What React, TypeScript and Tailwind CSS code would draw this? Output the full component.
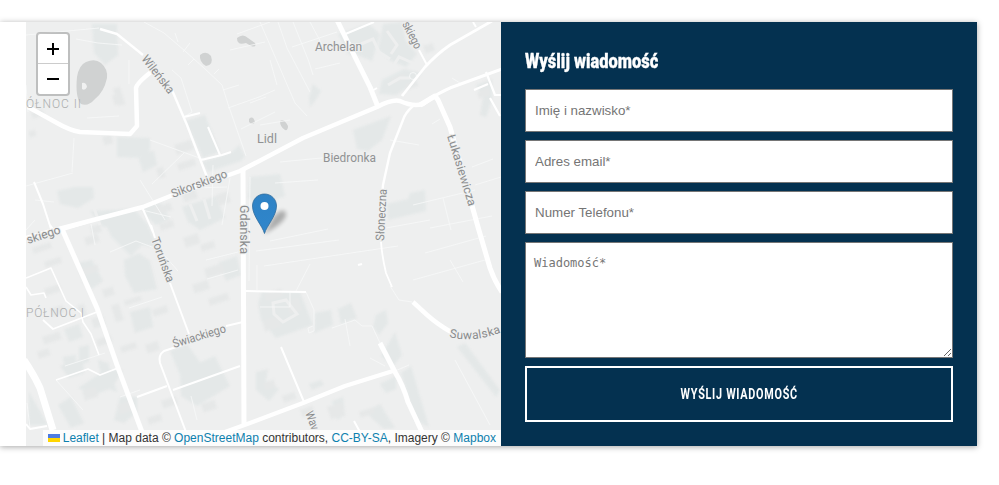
import React from "react";

type Road = [string, number];

const roads: Road[] = [
  // Main streets
  ["M26 238L55 230L143 207L173 195L240 171L303 138L377 107Q392 99 400 101Q413 107 423 104L433 97", 4.5],
  ["M420 105L435 96L438 100L450 127L478 227L490 268Q495 282 502 292", 5],
  ["M433 97Q446 89 458 85L502 69", 3],
  ["M243 169L244 424", 5],
  ["M225 432L250 423L303 403L345 386L393 371", 4.2],
  ["M337 20L353 53L370 87L378 107", 5],
  ["M402 96L425 67Q437 54 450 45L492 21", 2.8],
  ["M413 302L426 314Q437 324 451 332", 4.5],
  ["M380 343L395 372Q403 385 408 402L422 432", 5],
  ["M62 229L97 308L117 365L142 432", 5],
  ["M24 360Q34 375 40 388L53 430", 7],
  ["M28 107L57 123Q69 130 80 132L130 134L137 126L136 88Q137 83 151 72", 4.5],
  // Secondary streets
  ["M100 29L117 34L143 55M172 90L187 125L207 177", 2.4],
  ["M413 106Q405 113 403 120L390 153L383 185L379 232", 2.4],
  ["M381 242Q382 256 386 273L392 287", 1.8],
  ["M343 35L374 22M419 50L427 65M370 92L377 88M473 22L476 27", 2],
  ["M184 117L200 113M208 127L220 155M201 160L222 155L231 152", 2],
  ["M34 182L43 204L52 232M142 207L153 232M151 225L155 238M170 283L189 334M50 225L56 233M63 230L86 223", 2],
  ["M26 278L51 268L66 301L81 313L83 322L91 334L99 355M26 287L31 295L44 293L46 298", 1.6],
  ["M43 320L53 329L97 312M56 380L88 369L100 375L118 368", 1.8],
  ["M137 397L167 386M173 390L240 366M186 432L160 363Q158 355 164 351L182 345M226 326L243 322", 2],
  ["M246 291L306 292M281 347L304 402M354 421L360 432M26 424L30 429L47 426", 2],
  ["M486 72L495 95L502 95M474 90L488 84M490 98L500 116", 2.2],
];

const lanes =
  "M144 22L164 33L185 51L204 68L222 85L228 104L246 156M172 70L181 78L192 112L184 117M190 43L183 52M175 33L178 42M194 59L188 65M214 74L219 69M223 90L239 85M228 108L259 97L275 90M241 129L275 112M260 22L273 52L295 103L307 116M278 22L287 48L310 92M293 22L309 62L313 75M310 22L325 50M237 34L270 22M250 103L266 97M230 50L265 42M292 47L337 32M315 69L340 63M26 35L99 28M76 39L98 43L122 45M26 85L28 112M129 60L129 84M74 138L72 172M26 186L73 173M26 230L35 220M306 292L314 310L314 331L309 333L308 328L313 326M332 328L355 320L362 326L372 326L380 343M260 307L290 307L290 293M395 371L409 365M256 251L339 240M264 266L398 246M310 264L296 291M257 265L257 290M390 286L399 300L412 302M280 162L352 155M275 183L318 180M432 124L440 119M472 167L493 159M475 185L501 177M413 205L475 190M430 228L492 216M425 253L486 236M413 280L485 260M450 260L463 282M386 228L430 220M443 198L451 230M260 125L290 120M270 60L277 85M455 360L490 425M370 358L385 366M345 319L350 346M390 140L419 145M452 78L460 83M270 241L328 229M56 380L83 410M27 403L30 428M91 224L95 245M206 260L238 252M207 279L238 270M110 252L136 241L160 250L178 271M129 308L162 297M65 366L105 353M70 245L90 296M142 210L171 217M120 397L140 390M191 396L197 420M150 140L205 160M152 184L184 153M140 180L165 220M87 118L119 116M35 200L54 202M213 165L212 206M193 188L227 187M230 178L222 225M250 177L249 281";

const blocks =
  "M92 24L117 24L118 55L105 65L94 53ZM185 121L205 115L220 152L203 158ZM202 162L232 152L239 145L245 156L241 161L208 172ZM117 137L150 138L150 150L142 158L117 157ZM137 153L154 151L157 165L143 172ZM57 191L75 187L93 187L94 198L78 208L60 204ZM353 130L391 116L382 140L368 151L357 149ZM250 177L280 174L285 196L261 205L248 198ZM387 204L408 199L410 193L425 190L426 211L388 220ZM338 34L369 24L380 34L372 61L357 55L349 55ZM383 24L402 22L406 41L417 54L406 67L391 61L378 50ZM382 80L404 69L422 73L410 86L396 95L379 94ZM476 85L492 79L492 100L486 117L480 115L483 97ZM313 84L321 91L315 101L310 107L309 98ZM106 225L148 225L158 248L142 245L131 256L111 236ZM124 260L139 253L150 261L157 289L134 293L125 276ZM77 263L92 260L103 281L92 289L83 282ZM90 211L134 209L148 225L103 227ZM141 206L161 203L170 219L156 225L146 216ZM182 207L216 196L225 218L200 230L188 222ZM218 263L237 256L241 275L226 281ZM29 392L48 425L28 425ZM60 366L83 359L84 373L69 378ZM64 329L79 324L83 337L69 342ZM63 357L76 355L75 368L64 366ZM79 347L89 345L89 362L79 365ZM130 312L150 307L153 327L135 333ZM180 371L215 356L230 386L197 406L181 396ZM78 388L105 370L123 370L112 388L94 395ZM170 351L187 344L202 365L180 375ZM262 292L300 292L313 325L276 338L261 320L258 303ZM315 313L331 310L333 325L314 333ZM338 309L351 303L357 318L341 324ZM376 315L386 310L388 323L379 335L373 327ZM381 356L395 332L402 355L393 366ZM401 373L411 366L429 427L415 420ZM457 347L465 343L500 390L496 397ZM256 372L268 369L266 381L279 389L269 401L256 390ZM309 384L321 380L324 385L312 390ZM332 401L343 397L345 415L337 420ZM365 412L380 404L395 428L384 429ZM380 384L396 376L396 389L386 393ZM120 397L137 397L137 412L124 423L114 420ZM58 405L71 397L84 423L71 428ZM98 360L108 363L117 392L103 387Z";

const houses = [
  [174, 145, 18, 10], [177, 164, 18, 7], [156, 169, 7, 10], [102, 137, 9, 9],
  [112, 96, 10, 10], [113, 89, 7, 18], [31, 113, 12, 6], [28, 132, 7, 6],
  [153, 208, 18, 8], [181, 191, 14, 12], [216, 195, 12, 11], [90, 227, 10, 8],
  [32, 248, 19, 6], [44, 262, 17, 6], [84, 238, 14, 8], [44, 289, 16, 7],
  [79, 270, 19, 7], [102, 290, 11, 8], [159, 224, 14, 7], [183, 238, 15, 10],
  [200, 245, 14, 7], [204, 269, 19, 10], [192, 285, 16, 9], [208, 299, 20, 7],
  [111, 306, 8, 17], [124, 301, 17, 5], [152, 310, 15, 7], [50, 309, 13, 8],
  [42, 337, 18, 8], [37, 352, 12, 7], [77, 306, 7, 14], [91, 319, 12, 10],
  [96, 340, 15, 7], [120, 347, 16, 6], [145, 345, 13, 9], [161, 401, 15, 8],
  [201, 404, 14, 9], [117, 405, 13, 10], [147, 418, 14, 7], [82, 391, 14, 10],
  [264, 294, 18, 8], [286, 302, 13, 13], [262, 321, 17, 11], [263, 383, 11, 8],
  [282, 396, 13, 7], [300, 410, 13, 8], [327, 407, 15, 13], [359, 412, 15, 6],
  [423, 46, 10, 8], [391, 78, 14, 6], [405, 84, 12, 6], [477, 92, 12, 7],
] as const;

interface LabelProps {
  x: number;
  y: number;
  width?: number;
  rotate?: number;
  size?: number;
  fill?: string;
  children: string;
}

function Label({ x, y, width, rotate = 0, size = 12, fill = "#8a8c8d", children }: LabelProps) {
  return (
    <text
      transform={`translate(${x} ${y}) rotate(${rotate})`}
      fontSize={size}
      fill={fill}
      stroke="#eeefef"
      strokeWidth="2"
      paintOrder="stroke"
      textLength={width}
      lengthAdjust="spacingAndGlyphs"
    >
      {children}
    </text>
  );
}

function StreetMap() {
  return (
    <svg
      viewBox="26 22 475 424"
      className="block h-full w-full overflow-hidden bg-[#eeefef] font-['Roboto','Open_Sans',sans-serif]"
    >
      <defs>
        <linearGradient id="pin" x1="0" y1="0" x2="0" y2="1">
          <stop offset="0" stopColor="#2e82c5" />
          <stop offset="1" stopColor="#2f86cc" />
        </linearGradient>
        <filter id="soft" x="-40%" y="-40%" width="180%" height="180%">
          <feGaussianBlur stdDeviation="2.2" />
        </filter>
        <filter id="edge" x="0" y="0" width="100%" height="100%" colorInterpolationFilters="sRGB">
          <feGaussianBlur stdDeviation="0.8" />
        </filter>
        <path id="suwalska" d="M449 337Q475 344 507 330" />
      </defs>

      <g filter="url(#edge)">
        <path d={blocks} fill="#e4e8e8" />
        {houses.map(([x, y, w, h]) => (
          <rect key={`${x}-${y}`} x={x} y={y} width={w} height={h} fill="#e6e8e8" transform={`rotate(-18 ${x} ${y})`} />
        ))}
      </g>
      <g fill="none" stroke="#eeefef" strokeWidth="3">
        <path d="M361 44L373 39L379 52L390 59M376 72L392 68L399 57L415 64M388 85L400 78L410 78M387 31L397 45L391 54M190 204L197 221M204 199L210 219M93 205L100 225M273 303L286 300L297 314L283 322L274 314Z" />
      </g>
      <g fill="#d0d2d2">
        <path d="M77 77Q79 65 86 62Q95 58 101 63Q108 69 107 78Q104 92 95 99Q88 107 81 104Q75 97 77 77Z" />
        <path d="M200 55Q206 50 211 56Q214 65 206 66Q199 62 200 55Z" />
        <path d="M237 38Q243 33 248 38L255 43Q257 48 251 46L246 43Q237 46 237 38Z" />
        <path d="M249 119Q253 115 255 122Q253 126 249 122ZM280 121Q284 118 288 126Q288 131 285 130Q280 127 280 121Z" />
      </g>
      <path d="M82 83Q86 82 87 87Q85 91 82 89Z" fill="#f0f1f1" />

      <path d={lanes} fill="none" stroke="#f8f9f9" strokeWidth="0.8" />
      <g fill="none" stroke="#fff" strokeLinejoin="round">
        {roads.map(([d, w]) => (
          <path key={d} d={d} strokeWidth={w} />
        ))}
        <path d="M358 265L362 264" strokeWidth="2" />
        <circle cx="413" cy="76" r="3.5" strokeWidth="0.8" opacity=".7" />
      </g>

      <Label x={315} y={51} width={47} fill="#909293">Archelan</Label>
      <Label x={257} y={143} width={20} fill="#909293">Lidl</Label>
      <Label x={323} y={162} width={53} fill="#909293">Biedronka</Label>
      <Label x={141} y={59} width={45} rotate={52}>Wileńska</Label>
      <Label x={173} y={198} width={59} rotate={-21}>Sikorskiego</Label>
      <Label x={28} y={244} width={35} rotate={-18}>skiego</Label>
      <Label x={240} y={205} width={49} rotate={90}>Gdańska</Label>
      <Label x={384} y={241} width={52} rotate={-87}>Słoneczna</Label>
      <Label x={447} y={136} width={74} rotate={73}>Łukasiewicza</Label>
      <Label x={151} y={239} width={47} rotate={70}>Toruńska</Label>
      <Label x={174} y={348} width={55} rotate={-17}>Świackiego</Label>
      <Label x={402} y={24} width={29} rotate={63}>skiego</Label>
      <Label x={305} y={413} width={19} rotate={69}>Wav</Label>
      <text fontSize="12" fill="#8a8c8d" stroke="#eeefef" strokeWidth="2" paintOrder="stroke">
        <textPath href="#suwalska" textLength="53">Suwalska</textPath>
      </text>
      <text x="26" y="108" fontSize="12" fill="#acaeae" textLength="55" fontWeight="300">ÓŁNOC II</text>
      <text x="26" y="317" fontSize="12" fill="#acaeae" textLength="58" fontWeight="300">PÓŁNOC I</text>

      <path d="M264 234L274 216Q284 206 286 214Q286 222 264 234Z" fill="#000" opacity=".28" filter="url(#soft)" />
      <path
        d="M264.500 233.500C262.500 226 252.500 216 252.500 206C252.500 199 258 194 264.500 194C271 194 276.500 199 276.500 206C276.500 216 266.500 226 264.500 233.500Z"
        fill="url(#pin)"
        stroke="#2e6c9d"
        strokeWidth="0.8"
      />
      <circle cx="264.500" cy="206" r="4" fill="#fff" />
    </svg>
  );
}

function ZoomControl() {
  return (
    <div className="absolute top-[10px] left-[10px] flex w-[34px] flex-col overflow-hidden rounded border-2 border-black/20 bg-white bg-clip-padding">
      {["+", "−"].map((sign) => (
        <button
          key={sign}
          aria-label={sign}
          className="flex h-[30px] items-center justify-center text-black first:border-b first:border-[#ccc]"
        >
          <svg viewBox="0 0 12 12" className="h-3 w-3" stroke="currentColor" strokeWidth="2">
            <path d={sign === "+" ? "M0 6H12M6 0V12" : "M0 6H12"} />
          </svg>
        </button>
      ))}
    </div>
  );
}

function Attribution() {
  return (
    <div className="absolute right-0 bottom-0 flex h-[16px] items-center bg-white/80 px-[5px] font-['Liberation_Sans',Arial,sans-serif] text-[12px] leading-[16px] whitespace-pre text-[#333]">
      <svg viewBox="0 0 12 8" className="mr-[3px] h-2 w-3">
        <path fill="#4c7be1" d="M0 0h12v4H0z" />
        <path fill="#ffd500" d="M0 4h12v4H0z" />
      </svg>
      <a className="text-[#0d80ae]">Leaflet</a>
      {" | Map data © "}
      <a className="text-[#0d80ae]">OpenStreetMap</a>
      {" contributors, "}
      <a className="text-[#0d80ae]">CC-BY-SA</a>
      {", Imagery © "}
      <a className="text-[#0d80ae]">Mapbox</a>
    </div>
  );
}

function ContactForm() {
  return (
    <form className="flex h-full w-[476px] shrink-0 flex-col gap-2 bg-[#043150] px-6 pt-[22px] pb-6">
      <h2 className="mb-[5px] h-[32px] font-['Roboto','Open_Sans',sans-serif] text-[21px] leading-[34px] font-black text-white">
        <span className="inline-block origin-left scale-x-[0.785] whitespace-nowrap [-webkit-text-stroke:0.3px_white]">
          Wyślij wiadomość
        </span>
      </h2>
      {["Imię i nazwisko*", "Adres email*", "Numer Telefonu*"].map((label) => (
        <input
          key={label}
          placeholder={label}
          className="h-[43px] w-full shrink-0 border border-[#767676] bg-white px-[9px] font-['Liberation_Sans',Arial,sans-serif] text-[13.333px] placeholder:text-[#757575]"
        />
      ))}
      <textarea
        placeholder="Wiadomość*"
        className="block h-[116px] w-full shrink-0 resize border border-[#767676] bg-white px-2 py-[12px] font-['DejaVu_Sans_Mono',monospace] text-[12px] leading-[16px] placeholder:text-[#757575]"
      />
      <button
        type="button"
        className="flex h-14 w-full shrink-0 items-center justify-center border-2 border-white pt-px font-['Roboto','Open_Sans',sans-serif] text-[15px] font-bold tracking-[1px] text-white"
      >
        <span className="inline-block scale-x-[0.722] whitespace-nowrap">WYŚLIJ WIADOMOŚĆ</span>
      </button>
    </form>
  );
}

export default function App() {
  return (
    <main className="h-[485px] w-full overflow-hidden bg-white pt-[22px]">
      <section className="flex h-[424px] w-[977px] bg-white pl-[26px] shadow-[0_1px_6px_rgba(0,0,0,0.35)]">
        <div className="relative min-w-0 flex-1 overflow-hidden">
          <StreetMap />
          <ZoomControl />
          <Attribution />
        </div>
        <ContactForm />
      </section>
    </main>
  );
}
